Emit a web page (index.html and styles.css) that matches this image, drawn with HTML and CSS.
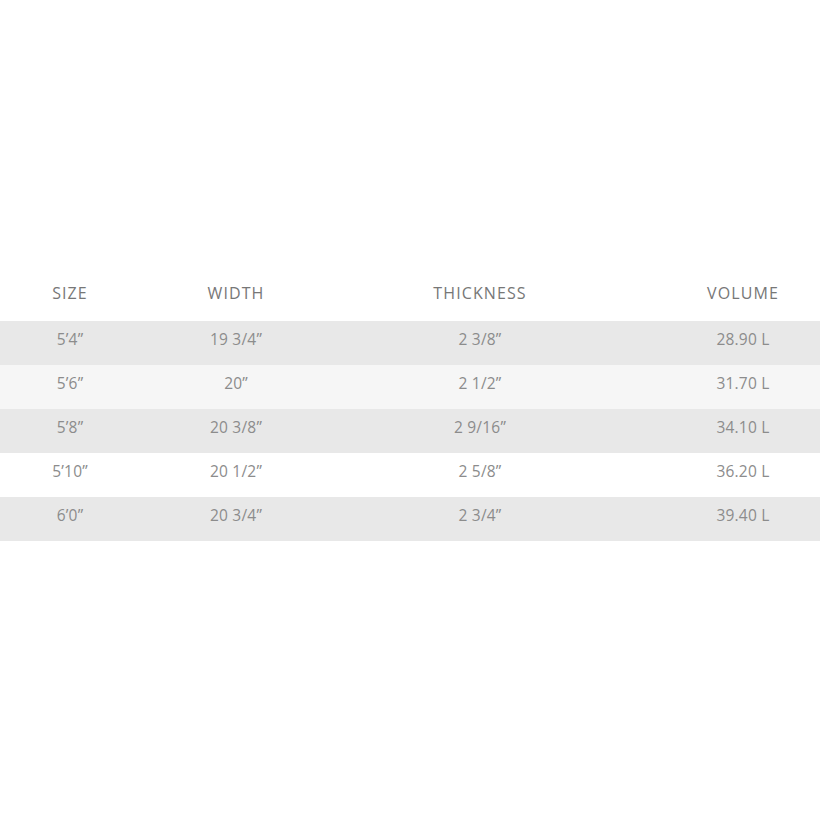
FILE: index.html
```html
<!DOCTYPE html>
<html>
<head>
<meta charset="utf-8">
<link rel="stylesheet" href="styles.css">
</head>
<body>
<div class="page">
  <div class="table">
    <div class="row head">
      <div class="c c1">SIZE</div><div class="c c2">WIDTH</div><div class="c c3">THICKNESS</div><div class="c c4">VOLUME</div>
    </div>
    <div class="row grey">
      <div class="c c1">5’4”</div><div class="c c2">19 3/4”</div><div class="c c3">2 3/8”</div><div class="c c4">28.90 L</div>
    </div>
    <div class="row light">
      <div class="c c1">5’6”</div><div class="c c2">20”</div><div class="c c3">2 1/2”</div><div class="c c4">31.70 L</div>
    </div>
    <div class="row grey">
      <div class="c c1">5’8”</div><div class="c c2">20 3/8”</div><div class="c c3">2 9/16”</div><div class="c c4">34.10 L</div>
    </div>
    <div class="row white">
      <div class="c c1">5’10”</div><div class="c c2">20 1/2”</div><div class="c c3">2 5/8”</div><div class="c c4">36.20 L</div>
    </div>
    <div class="row grey">
      <div class="c c1">6’0”</div><div class="c c2">20 3/4”</div><div class="c c3">2 3/4”</div><div class="c c4">39.40 L</div>
    </div>
  </div>
</div>
</body>
</html>
```
FILE: styles.css
```css
html, body {
  margin: 0;
  padding: 0;
  background: #ffffff;
}
.page {
  width: 820px;
  height: 820px;
  padding-top: 271px;
  box-sizing: border-box;
  font-family: "Open Sans", "DejaVu Sans", sans-serif;
}
.row {
  display: grid;
  grid-template-columns: 140px 192px 296px 1fr;
  height: 44px;
  box-sizing: border-box;
  padding-bottom: 8px;
  align-items: center;
  color: #8c8c8c;
  font-size: 15.5px;
  letter-spacing: 0.2px;
}
.row.head {
  height: 50px;
  padding-bottom: 6px;
  color: #777777;
  font-size: 16px;
  letter-spacing: 1.1px;
}
.grey { background: #e8e8e8; }
.light { background: #f6f6f6; }
.white { background: #ffffff; }
.c { text-align: center; }
.c4 { padding-left: 38px; }
```
